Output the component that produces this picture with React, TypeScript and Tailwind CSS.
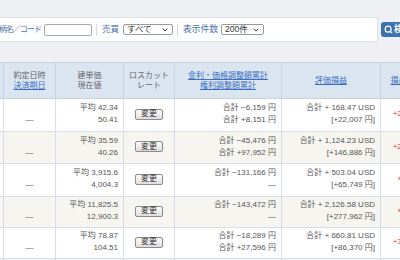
import { Search, ChevronDown } from "lucide-react";

type Row = {
  price: [string, string];
  adj: [string, string];
  usd: string;
  yen: string;
  pl: string;
  bg: string;
  h: string;
};

const rows: Row[] = [
  {
    price: ["平均 42.34", "50.41"],
    adj: ["合計 −6,159 円", "合計 +8,151 円"],
    usd: "合計 + 168.47 USD",
    yen: "[+22,007 円]",
    pl: "+28,166 円",
    bg: "bg-white",
    h: "h-[33px]",
  },
  {
    price: ["平均 35.59", "40.26"],
    adj: ["合計 −45,476 円", "合計 +97,952 円"],
    usd: "合計 + 1,124.23 USD",
    yen: "[+146,886 円]",
    pl: "+21,410 円",
    bg: "bg-[#f6f5ef]",
    h: "h-[32px]",
  },
  {
    price: ["平均 3,915.6", "4,004.3"],
    adj: ["合計 −131,166 円", "—"],
    usd: "合計 + 503.04 USD",
    yen: "[+65,749 円]",
    pl: "+6,584 円",
    bg: "bg-white",
    h: "h-[33px]",
  },
  {
    price: ["平均 11,825.5", "12,900.3"],
    adj: ["合計 −143,472 円", "—"],
    usd: "合計 + 2,126.58 USD",
    yen: "[+277,962 円]",
    pl: "+8,930 円",
    bg: "bg-[#f6f5ef]",
    h: "h-[31px]",
  },
  {
    price: ["平均 78.87", "104.51"],
    adj: ["合計 −18,289 円", "合計 +27,596 円"],
    usd: "合計 + 660.81 USD",
    yen: "[+86,370 円]",
    pl: "+35,677 円",
    bg: "bg-white",
    h: "h-[31px]",
  },
];

const headCell =
  "flex flex-col items-center justify-center border-r border-[#c6d3e2]";
const bodyCell =
  "flex flex-col items-end justify-center pr-[5px] pb-[2px] border-r border-[#d6dfe9] leading-[12px]";
const link = "text-[#3b6fc4] underline";

function Select({ label, w }: { label: string; w: string }) {
  return (
    <div
      className={`${w} h-[11px] shrink-0 flex items-center justify-between pl-[3px] pr-[3px] border border-[#9a9a9a] rounded-[2px] bg-white text-[#333] text-[8.5px] leading-none`}
    >
      <span>{label}</span>
      <ChevronDown size={8} strokeWidth={3} className="text-[#333]" />
    </div>
  );
}

export default function App() {
  return (
    <div className="w-[400px] h-[260px] overflow-hidden bg-[#eef0f3] font-['Liberation_Sans','Noto_Sans_CJK_JP',sans-serif] text-[8px] text-[#666]">
      <div className="h-[17px]" />

      {/* search bar */}
      <div className="flex items-center h-[25px]">
        <div className="flex items-center shrink-0 w-[388px] h-full ml-[-10px] bg-white border-y border-r border-[#dce1e7] text-[#4d73a8] text-[8px] whitespace-nowrap">
          <span className="ml-[2px] tracking-[-1px]">銘柄名／コード</span>
          <div className="ml-[3px] w-[48px] h-[12px] shrink-0 border border-[#a9a9a9] rounded-[2px] bg-white" />
          <div className="ml-[4px] w-px h-[12px] shrink-0 bg-[#d3dbe5]" />
          <span className="ml-[5px] text-[8.5px]">売買</span>
          <div className="ml-[4px]">
            <Select label="すべて" w="w-[50px]" />
          </div>
          <div className="ml-[4px] w-px h-[12px] shrink-0 bg-[#d3dbe5]" />
          <span className="ml-[5px] text-[8.75px]">表示件数</span>
          <div className="ml-[3px]">
            <Select label="200件" w="w-[43px]" />
          </div>
        </div>
        <button className="ml-[3px] shrink-0 h-[15px] w-[36px] rounded-[3px] bg-[#3e72ab] text-white flex items-center gap-[1px] pl-[3px] text-[9px] font-bold leading-none">
          <Search size={9} strokeWidth={3} />
          <span>検索</span>
        </button>
      </div>

      <div className="h-[20px]" />

      {/* table */}
      <div className="ml-[-37px] w-[478px]">
        <div className="grid grid-cols-[41px_52px_68px_51px_107px_99px_60px] h-[37px] bg-[#dbe5f0] border-y border-[#c6d3e2] leading-[10px] text-[#666] whitespace-nowrap">
          <div className={headCell} />
          <div className={headCell}>
            <span>約定日時</span>
            <span className={link}>決済期日</span>
          </div>
          <div className={headCell}>
            <span>建単価</span>
            <span>現在値</span>
          </div>
          <div className={headCell}>
            <span>ロスカット</span>
            <span>レート</span>
          </div>
          <div className={headCell}>
            <span className={link}>金利・価格調整額累計</span>
            <span className={link}>権利調整額累計</span>
          </div>
          <div className={headCell}>
            <span className={link}>評価損益</span>
          </div>
          <div className={headCell}>
            <span className={link}>損益（円）</span>
          </div>
        </div>

        {rows.map((r, i) => (
          <div
            key={i}
            className={`grid grid-cols-[41px_52px_68px_51px_107px_99px_60px] ${r.h} ${r.bg} border-b border-[#d6dfe9] text-[#555] whitespace-nowrap`}
          >
            <div className={bodyCell} />
            <div className="flex flex-col items-center justify-center pb-[2px] border-r border-[#d6dfe9] leading-[12px]">
              <span>&nbsp;</span>
              <span>—</span>
            </div>
            <div className={bodyCell}>
              <span>{r.price[0]}</span>
              <span>{r.price[1]}</span>
            </div>
            <div className="flex items-center justify-center pb-[2px] border-r border-[#d6dfe9]">
              <button className="w-[28px] h-[11px] border border-[#8c8c8c] rounded-[2px] bg-gradient-to-b from-[#fbfbfb] to-[#dedede] text-[#333] text-[8px] leading-none">
                変更
              </button>
            </div>
            <div className={bodyCell}>
              <span>{r.adj[0]}</span>
              <span>{r.adj[1]}</span>
            </div>
            <div className={bodyCell}>
              <span>{r.usd}</span>
              <span>{r.yen}</span>
            </div>
            <div className="flex items-center justify-end pr-[8px] pb-[2px] border-r border-[#d6dfe9] text-[#e8443a]">
              {r.pl}
            </div>
          </div>
        ))}
        <div className="grid grid-cols-[41px_52px_68px_51px_107px_99px_60px] h-[20px] bg-[#f6f5ef]">
          <div className="border-r border-[#d6dfe9]" />
          <div className="border-r border-[#d6dfe9]" />
          <div className="border-r border-[#d6dfe9]" />
          <div className="border-r border-[#d6dfe9]" />
          <div className="border-r border-[#d6dfe9]" />
          <div className="border-r border-[#d6dfe9]" />
          <div className="border-r border-[#d6dfe9]" />
        </div>
      </div>
    </div>
  );
}
